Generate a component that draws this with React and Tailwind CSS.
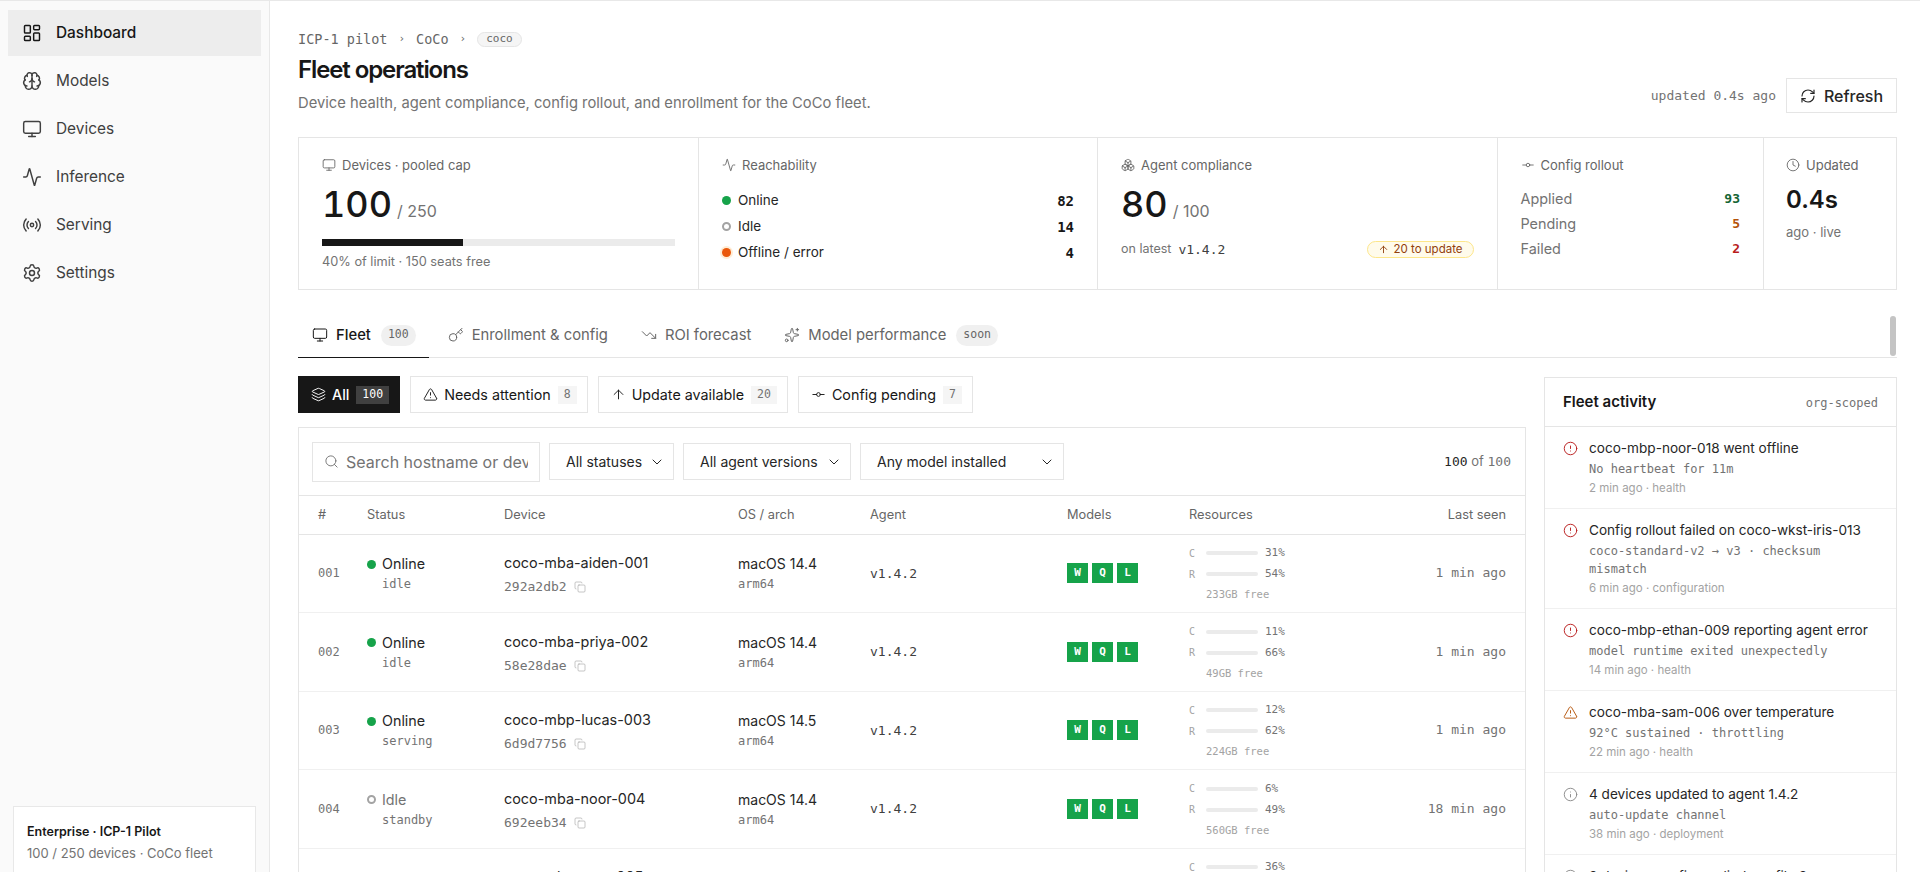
import React from "react";
import {
  LayoutDashboard, Brain, Monitor, Activity, Radio, Settings, RefreshCw, Boxes,
  GitCommitHorizontal, Clock, ArrowUp, Key, TrendingDown, Sparkles, Layers,
  TriangleAlert, Search, ChevronDown, Copy, CircleAlert, Info,
} from "lucide-react";

const mono = "font-['DejaVu_Sans_Mono',monospace]";

const nav = [
  { label: "Dashboard", icon: LayoutDashboard, active: true },
  { label: "Models", icon: Brain },
  { label: "Devices", icon: Monitor },
  { label: "Inference", icon: Activity },
  { label: "Serving", icon: Radio },
  { label: "Settings", icon: Settings },
];

const devices = [
  { n: "001", status: "Online", sub: "idle", name: "coco-mba-aiden-001", id: "292a2db2", os: "macOS 14.4", c: "31%", r: "54%", free: "233GB free", seen: "1 min ago" },
  { n: "002", status: "Online", sub: "idle", name: "coco-mba-priya-002", id: "58e28dae", os: "macOS 14.4", c: "11%", r: "66%", free: "49GB free", seen: "1 min ago" },
  { n: "003", status: "Online", sub: "serving", name: "coco-mbp-lucas-003", id: "6d9d7756", os: "macOS 14.5", c: "12%", r: "62%", free: "224GB free", seen: "1 min ago" },
  { n: "004", status: "Idle", sub: "standby", name: "coco-mba-noor-004", id: "692eeb34", os: "macOS 14.4", c: "6%", r: "49%", free: "560GB free", seen: "18 min ago" },
  { n: "005", status: "Idle", sub: "standby", name: "coco-mba-sara-005", id: "7b1c04ae", os: "macOS 14.4", c: "36%", r: "51%", free: "310GB free", seen: "22 min ago" },
];

const activity = [
  { kind: "error", title: "coco-mbp-noor-018 went offline", sub: "No heartbeat for 11m", meta: "2 min ago · health" },
  { kind: "error", title: "Config rollout failed on coco-wkst-iris-013", sub: "coco-standard-v2 → v3 · checksum mismatch", meta: "6 min ago · configuration" },
  { kind: "error", title: "coco-mbp-ethan-009 reporting agent error", sub: "model runtime exited unexpectedly", meta: "14 min ago · health" },
  { kind: "warn", title: "coco-mba-sam-006 over temperature", sub: "92°C sustained · throttling", meta: "22 min ago · health" },
  { kind: "info", title: "4 devices updated to agent 1.4.2", sub: "auto-update channel", meta: "38 min ago · deployment" },
  { kind: "info", title: "3 devices config applied: profile 3", sub: "coco-standard-v2", meta: "1 hr ago · configuration" },
];

function Sidebar() {
  return (
    <aside className="w-[270px] shrink-0 h-full bg-[#fafafa] border-r border-[#e8e8e8] px-2 pt-[9px] flex flex-col">
      <nav className="flex flex-col gap-0.5">
        {nav.map((item) => (
          <div
            key={item.label}
            className={`h-[46px] flex items-center gap-[14px] px-[14px] text-[15.4px] ${
              item.active ? "bg-[#ededed] text-[#171717] font-medium" : "text-[#404040]"
            }`}
          >
            <item.icon size={20} strokeWidth={1.75} />
            <span>{item.label}</span>
          </div>
        ))}
      </nav>
      <div className="mt-auto mx-[5px] h-[66px] shrink-0 bg-white border border-b-0 border-[#e8e8e8] px-[13px] pt-[16px]">
        <div className="text-[12.5px] leading-[18px] font-semibold text-[#171717]">Enterprise · ICP-1 Pilot</div>
        <div className="text-[13px] leading-[20px] mt-[2px] text-[#737373]">100 / 250 devices · CoCo fleet</div>
      </div>
    </aside>
  );
}

function StatLabel({ icon: Icon, children }) {
  return (
    <div className="flex items-center gap-[6px] text-[13px] leading-5 text-[#666]">
      <Icon size={14} strokeWidth={1.5} />
      <span>{children}</span>
    </div>
  );
}

function Dot({ status, className = "" }) {
  if (status === "Online") return <span className={`w-[9px] h-[9px] rounded-full bg-[#16a34a] ${className}`} />;
  if (status === "Idle") return <span className={`w-[9px] h-[9px] rounded-full border-2 border-[#a3a3a3] ${className}`} />;
  return <span className={`w-[9px] h-[9px] rounded-full bg-[#ea580c] shadow-[0_0_0_2px_#ffedd5] ${className}`} />;
}

function StatsCard() {
  return (
    <section className="mt-[22px] grid grid-cols-[400px_399px_399.5px_266.5px_1fr] h-[153px] border border-[#e5e5e5] divide-x divide-[#e5e5e5]">
      <div className="px-[23px] pt-[17px]">
        <StatLabel icon={Monitor}>Devices · pooled cap</StatLabel>
        <div className="flex items-baseline gap-[5px] mt-[6px]">
          <span className="text-[36px] leading-[46px] font-medium tabular-nums text-[#171717]">100</span>
          <span className="text-base text-[#737373]">/ 250</span>
        </div>
        <div className="h-[7px] bg-[#ebebeb] mt-[12px]">
          <div className="h-full w-[40%] bg-[#171717]" />
        </div>
        <div className="text-[12.75px] leading-4 mt-[8px] text-[#737373]">40% of limit · 150 seats free</div>
      </div>
      <div className="px-[23px] pt-[17px]">
        <StatLabel icon={Activity}>Reachability</StatLabel>
        <div className="mt-[15px] flex flex-col gap-[5px] text-[13.5px] leading-[21px] text-[#262626]">
          {[["Online", "82"], ["Idle", "14"], ["Offline", "4"]].map(([k, v]) => (
            <div key={k} className="flex items-center">
              <Dot status={k} className="mr-[7px]" />
              <span>{k === "Offline" ? "Offline / error" : k}</span>
              <span className={`ml-auto text-sm font-bold text-[#171717] ${mono}`}>{v}</span>
            </div>
          ))}
        </div>
      </div>
      <div className="px-[23px] pt-[17px]">
        <StatLabel icon={Boxes}>Agent compliance</StatLabel>
        <div className="flex items-baseline gap-[5px] mt-[6px]">
          <span className="text-[36px] leading-[46px] font-medium tabular-nums text-[#171717]">80</span>
          <span className="text-base text-[#737373]">/ 100</span>
        </div>
        <div className="flex items-center mt-[13px] text-[12.5px] text-[#737373]">
          <span>on latest</span>
          <span className={`ml-[7px] text-[13px] text-[#404040] ${mono}`}>v1.4.2</span>
          <span className="ml-auto flex items-center gap-[5px] h-[17px] px-[10px] rounded-full border border-[#fde68a] bg-[#fffbeb] text-[11.5px] text-[#92400e]">
            <ArrowUp size={11} />
            20 to update
          </span>
        </div>
      </div>
      <div className="px-[23px] pt-[17px]">
        <StatLabel icon={GitCommitHorizontal}>Config rollout</StatLabel>
        <div className="mt-[14px] flex flex-col gap-[5px] text-[14.4px] leading-[20px] text-[#737373]">
          <div className="flex justify-between"><span>Applied</span><span className={`text-[13px] font-bold text-[#166534] ${mono}`}>93</span></div>
          <div className="flex justify-between"><span>Pending</span><span className={`text-[13px] font-bold text-[#b45309] ${mono}`}>5</span></div>
          <div className="flex justify-between"><span>Failed</span><span className={`text-[13px] font-bold text-[#b91c1c] ${mono}`}>2</span></div>
        </div>
      </div>
      <div className="pl-[22px] pt-[17px]">
        <StatLabel icon={Clock}>Updated</StatLabel>
        <div className="text-2xl leading-8 font-semibold text-[#171717] mt-[9px]">0.4s</div>
        <div className="text-[13px] leading-4 mt-[8px] text-[#737373]">ago · live</div>
      </div>
    </section>
  );
}

function Tabs() {
  const items = [
    { label: "Fleet", icon: Monitor, badge: "100", active: true },
    { label: "Enrollment & config", icon: Key },
    { label: "ROI forecast", icon: TrendingDown },
    { label: "Model performance", icon: Sparkles, badge: "soon" },
  ];
  return (
    <div className="mt-[21px] h-[47px] flex gap-[5px] border-b border-[#e5e5e5]">
      {items.map((t) => (
        <div
          key={t.label}
          className={`h-[47px] pt-[2px] flex items-center gap-[8px] pl-[14px] text-[14.8px] -mb-px border-b ${
            t.badge ? "pr-[13px]" : "pr-[14px]"
          } ${t.active ? "border-[#171717] text-[#171717] font-medium" : "border-transparent text-[#666]"}`}
        >
          <t.icon size={16} strokeWidth={1.5} />
          <span>{t.label}</span>
          {t.badge && (
            <span className={`ml-[2px] h-[21px] px-[7px] flex items-center rounded-full bg-[#f0f0f0] text-[11.5px] font-normal text-[#666] ${mono}`}>
              {t.badge}
            </span>
          )}
        </div>
      ))}
    </div>
  );
}

function Chips() {
  const items = [
    { label: "All", icon: Layers, count: "100", active: true },
    { label: "Needs attention", icon: TriangleAlert, count: "8" },
    { label: "Update available", icon: ArrowUp, count: "20" },
    { label: "Config pending", icon: GitCommitHorizontal, count: "7" },
  ];
  return (
    <div className="flex gap-[10px]">
      {items.map((c) => (
        <div
          key={c.label}
          className={`h-[37px] flex items-center gap-[6px] pl-[12px] pr-[10px] text-[14.3px] border ${
            c.active ? "font-medium bg-[#171717] border-[#171717] text-white" : "bg-white border-[#e5e5e5] text-[#171717]"
          }`}
        >
          <c.icon size={15} strokeWidth={1.5} />
          <span>{c.label}</span>
          <span className={`ml-px h-[18px] px-[6px] flex items-center text-[11.5px] font-normal ${mono} ${
            c.active ? "bg-[#404040] text-white" : "bg-[#f5f5f5] text-[#737373]"
          }`}>
            {c.count}
          </span>
        </div>
      ))}
    </div>
  );
}

function Select({ label, width }) {
  return (
    <div className={`h-[37px] flex items-center justify-between pl-[16px] pr-[8px] border border-[#e5e5e5] bg-white text-sm text-[#262626] ${width}`}>
      <span>{label}</span>
      <ChevronDown size={16} strokeWidth={1.5} />
    </div>
  );
}

function ResourceLine({ letter, value }) {
  return (
    <div className={`flex items-center h-[21px] ${mono}`}>
      <span className="w-[17px] text-[10px] text-[#a3a3a3]">{letter}</span>
      <span className="w-[52px] h-1 rounded-full bg-[#ebebeb]" />
      <span className="ml-[7px] text-[11px] text-[#737373]">{value}</span>
    </div>
  );
}

function FleetTable() {
  const th = "text-left font-normal text-[12.8px] text-[#666] h-[38px] border-b border-[#e5e5e5]";
  return (
    <div className="mt-[14px] border border-[#e5e5e5] border-b-0 bg-white">
      <div className="h-[68px] flex items-center gap-[9px] pl-[13px] pr-[14px] border-b border-[#e5e5e5]">
        <div className="w-[228px] h-[40px] flex items-center gap-[7px] px-[11px] border border-[#e5e5e5]">
          <Search size={15} strokeWidth={1.5} className="text-[#737373] shrink-0" />
          <input
            readOnly
            placeholder="Search hostname or device id"
            className="w-full min-w-0 bg-transparent outline-none text-base placeholder:text-[#737373]"
          />
        </div>
        <Select label="All statuses" width="w-[125px]" />
        <Select label="All agent versions" width="w-[168px]" />
        <Select label="Any model installed" width="w-[204px]" />
        <div className="ml-auto text-[13px] text-[#737373]">
          <span className={`text-[#262626] ${mono}`}>100</span> of <span className={mono}>100</span>
        </div>
      </div>
      <table className="w-full table-fixed border-collapse">
        <colgroup>
          <col className="w-[68px]" />
          <col className="w-[137px]" />
          <col className="w-[234px]" />
          <col className="w-[132px]" />
          <col className="w-[197px]" />
          <col className="w-[122px]" />
          <col />
          <col className="w-[19px]" />
        </colgroup>
        <thead>
          <tr>
            <th className={`${th} pl-[19px]`}>#</th>
            <th className={th}>Status</th>
            <th className={th}>Device</th>
            <th className={th}>OS / arch</th>
            <th className={th}>Agent</th>
            <th className={th}>Models</th>
            <th className={th}>
              <div className="flex justify-between">
                <span>Resources</span>
                <span>Last seen</span>
              </div>
            </th>
            <th className={th} />
          </tr>
        </thead>
        <tbody>
          {devices.map((d) => (
            <tr key={d.n} className="h-[78.5px] border-b border-[#f0f0f0]">
              <td className={`pl-[19px] text-xs text-[#737373] ${mono}`}>{d.n}</td>
              <td>
                <div className="flex items-center gap-[6px]">
                  <Dot status={d.status} />
                  <span className={`text-[14.3px] leading-5 ${d.status === "Idle" ? "text-[#737373]" : "text-[#262626]"}`}>{d.status}</span>
                </div>
                <div className={`pl-[15px] mt-[2px] text-xs leading-4 text-[#737373] ${mono}`}>{d.sub}</div>
              </td>
              <td className="pt-[4px]">
                <div className="text-[14.4px] leading-5 text-[#262626]">{d.name}</div>
                <div className={`flex items-center gap-[7px] mt-[4px] text-[13px] leading-5 text-[#737373] ${mono}`}>
                  {d.id}
                  <Copy size={12} strokeWidth={1.25} className="text-[#a3a3a3]" />
                </div>
              </td>
              <td>
                <div className="text-sm leading-5 text-[#262626]">{d.os}</div>
                <div className={`mt-[2px] text-xs leading-4 text-[#737373] ${mono}`}>arm64</div>
              </td>
              <td className={`text-[13px] text-[#404040] ${mono}`}>v1.4.2</td>
              <td>
                <div className="flex gap-1">
                  {["W", "Q", "L"].map((m) => (
                    <span key={m} className={`w-[21px] h-[20px] flex items-center justify-center bg-[#16a34a] text-white text-[11px] font-bold ${mono}`}>{m}</span>
                  ))}
                </div>
              </td>
              <td className="relative pt-[2px]">
                <ResourceLine letter="C" value={d.c} />
                <ResourceLine letter="R" value={d.r} />
                <div className={`pl-[17px] h-[21px] flex items-center text-[10.5px] text-[#a3a3a3] ${mono}`}>{d.free}</div>
                <div className={`absolute right-0 top-1/2 -translate-y-1/2 text-[13px] text-[#737373] ${mono}`}>{d.seen}</div>
              </td>
              <td />
            </tr>
          ))}
        </tbody>
      </table>
    </div>
  );
}

function ActivityIcon({ kind }) {
  if (kind === "error") return <CircleAlert size={15} strokeWidth={1.5} className="text-[#b91c1c] mt-[3px] shrink-0" />;
  if (kind === "warn") return <TriangleAlert size={15} strokeWidth={1.5} className="text-[#b45309] mt-[3px] shrink-0" />;
  return <Info size={15} strokeWidth={1.5} className="text-[#8a8a8a] mt-[3px] shrink-0" />;
}

function ActivityPanel() {
  return (
    <aside className="w-[353px] shrink-0 mt-px border border-[#e5e5e5] border-b-0 bg-white">
      <div className="h-[49px] pt-px flex items-center justify-between px-[18px] border-b border-[#e5e5e5]">
        <span className="text-[15px] font-semibold text-[#171717]">Fleet activity</span>
        <span className={`text-xs text-[#737373] ${mono}`}>org-scoped</span>
      </div>
      {activity.map((a) => (
        <div key={a.title} className="flex gap-[11px] px-[18px] pt-[11px] pb-[11px] border-b border-[#f0f0f0]">
          <ActivityIcon kind={a.kind} />
          <div className="min-w-0">
            <div className="text-[13.6px] leading-5 text-[#262626]">{a.title}</div>
            <div className={`text-xs leading-[18px] mt-[2px] text-[#737373] ${mono}`}>{a.sub}</div>
            <div className="text-[11.5px] leading-[18px] mt-[1px] text-[#a3a3a3]">{a.meta}</div>
          </div>
        </div>
      ))}
    </aside>
  );
}

export default function App() {
  return (
    <div className="h-screen flex overflow-hidden bg-white border-t border-[#e8e8e8] font-['Inter',sans-serif] relative">
      <Sidebar />
      <main className="flex-1 min-w-0 pl-[28px] pr-[23px] pt-[30px]">
        <div className={`flex items-center gap-[11px] h-[16px] text-[13.5px] text-[#666] ${mono}`}>
          <span>ICP-1 pilot</span>
          <span className="text-[11px]">›</span>
          <span>CoCo</span>
          <span className="text-[11px]">›</span>
          <span className="h-[15px] px-[8px] flex items-center rounded-full bg-[#f5f5f5] border border-[#e5e5e5] text-[11px]">coco</span>
        </div>
        <div className="flex items-end justify-between">
          <div>
            <h1 className="mt-[7px] text-2xl leading-8 font-semibold tracking-[-1.1px] text-[#171717]">Fleet operations</h1>
            <p className="mt-[5px] text-[14.75px] leading-6 text-[#737373]">Device health, agent compliance, config rollout, and enrollment for the CoCo fleet.</p>
          </div>
          <div className="flex items-center gap-[10px] mb-[2px]">
            <span className={`text-[13px] text-[#737373] ${mono}`}>updated 0.4s ago</span>
            <button className="h-[35px] w-[111px] flex items-center justify-center gap-2 border border-[#e5e5e5] bg-white text-base font-medium text-[#262626]">
              <RefreshCw size={16} strokeWidth={1.75} />
              Refresh
            </button>
          </div>
        </div>
        <StatsCard />
        <Tabs />
        <div className="mt-[18px] flex gap-[18px] items-start">
          <div className="flex-1 min-w-0">
            <Chips />
            <FleetTable />
          </div>
          <ActivityPanel />
        </div>
      </main>
      <div className="absolute right-[24px] top-[315px] w-[6px] h-[40px] rounded-full bg-[#c4c4c4]" />
    </div>
  );
}
